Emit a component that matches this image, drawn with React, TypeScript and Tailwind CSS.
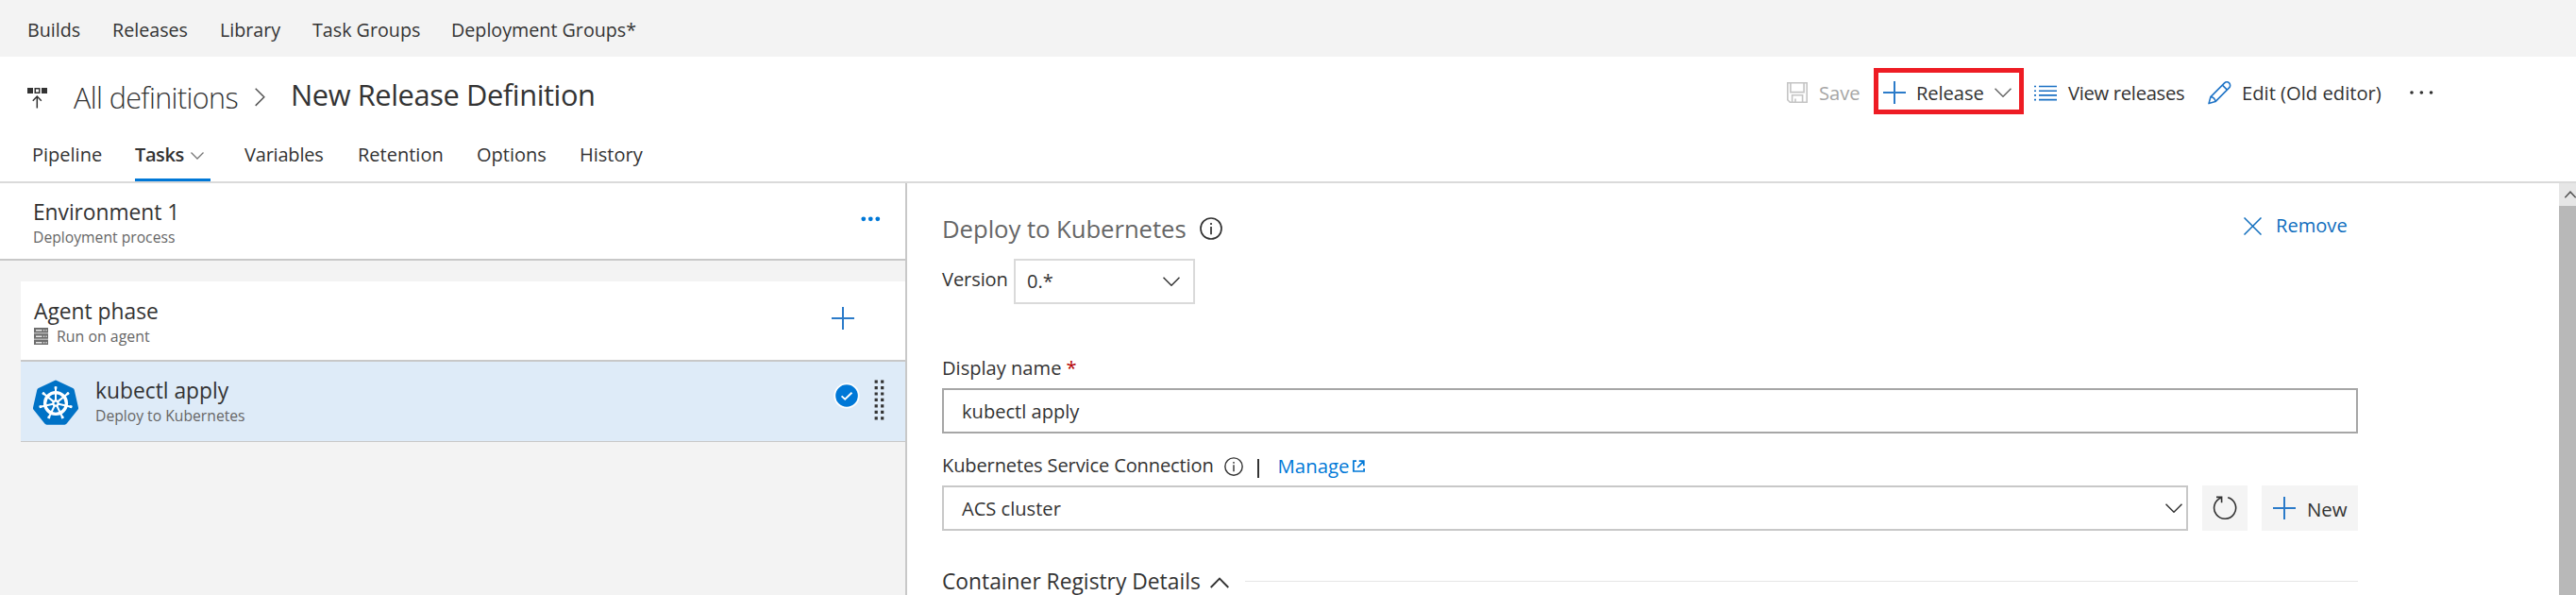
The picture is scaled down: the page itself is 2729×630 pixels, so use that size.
type IconProps = { className?: string };

function Chevron({ className = "" }: IconProps) {
  return (
    <svg className={`shrink-0 ${className}`} width="18" height="10" viewBox="0 0 18 10" fill="none" stroke="currentColor" strokeWidth="1.5">
      <path d="M0.5 0.7 9 9.2 17.5 0.7" />
    </svg>
  );
}

function Plus({ className = "" }: IconProps) {
  return (
    <svg className={`shrink-0 text-[#2b7bc9] ${className}`} width="24" height="24" viewBox="0 0 24 24" stroke="currentColor" strokeWidth="2">
      <path d="M12 0V24M0 12H24" />
    </svg>
  );
}

function Info({ className = "" }: IconProps) {
  return (
    <svg className={`shrink-0 ${className}`} viewBox="0 0 24 24" fill="none" stroke="currentColor" strokeWidth="1.7">
      <circle cx="12" cy="12" r="11" />
      <path d="M12 10V18.2M12 6V8" />
    </svg>
  );
}

function ReleaseIcon({ className = "" }: IconProps) {
  return (
    <svg className={`shrink-0 ${className}`} width="22" height="22" viewBox="0 0 22 22" fill="none" stroke="#333" strokeWidth="1.5">
      <path d="M0 0h6v6H0zM15 0h6v6h-6z" fill="#333" stroke="none" />
      <path d="M8.25 0.75h4.5v4.5h-4.5z" />
      <path d="M10.3 21.5V9M5.8 13.7 10.3 9l4.5 4.7" />
    </svg>
  );
}

function SaveIcon({ className = "" }: IconProps) {
  return (
    <svg className={`shrink-0 ${className}`} width="22" height="22" viewBox="0 0 22 22" fill="none" stroke="#c4c4c4" strokeWidth="1.6">
      <path d="M0.8 0.8H21.2V21.2H3.3L0.8 18.7z" />
      <path d="M3.9 0.8V10.6H18.1V0.8M5.6 21.2V13.8H16.6V21.2M9 21.2V17.4" />
    </svg>
  );
}

function ListIcon({ className = "" }: IconProps) {
  return (
    <svg className={`shrink-0 ${className}`} width="24" height="17" viewBox="0 0 24 17" stroke="#1a70c4" strokeWidth="1.6">
      <path d="M5 1.5H24M5 6.2H24M5 10.9H24M5 15.6H24M0 1.5H2M0 6.2H2M0 10.9H2M0 15.6H2" />
    </svg>
  );
}

function PencilIcon({ className = "" }: IconProps) {
  return (
    <svg className={`shrink-0 ${className}`} width="25" height="25" viewBox="0 0 25 25" fill="none" stroke="#1f74c7" strokeWidth="1.6" strokeLinejoin="round">
      <path d="M1 23.6 2.9 16.6 17.6 1.9a3.5 3.5 0 0 1 5 5L8 21.6z" />
      <path d="M2.9 16.6C5.6 16.6 8 19 8 21.6M15.4 4.1l5 5" />
    </svg>
  );
}

function Dots({ className = "" }: IconProps) {
  return (
    <svg className={`shrink-0 ${className}`} width="25" height="4" viewBox="0 0 25 4" fill="#333">
      <circle cx="2" cy="2" r="1.8" />
      <circle cx="12.3" cy="2" r="1.8" />
      <circle cx="22.5" cy="2" r="1.8" />
    </svg>
  );
}

function ServerIcon({ className = "" }: IconProps) {
  return (
    <svg className={`shrink-0 ${className}`} width="15" height="18" viewBox="0 0 15 18">
      <path d="M0 0h15v18H0z" fill="#b4b4b4" />
      {[0, 6.5, 13].map((y) => (
        <g key={y}>
          <path d={`M0 ${y}h15v5H0z`} fill="#6e6e6e" />
          <path d={`M2 ${y + 2}h6.5v1.4H2zM10 ${y + 2}h1.2v1.4H10zM12.5 ${y + 2}h1.2v1.4h-1.2z`} fill="#e8e8e8" />
        </g>
      ))}
    </svg>
  );
}

const ANGLES = [0, 1, 2, 3, 4, 5, 6].map((i) => (i * 2 * Math.PI) / 7);

function KubernetesIcon({ className = "" }: IconProps) {
  const points = ANGLES.map((a) => `${24 + 21.8 * Math.sin(a)},${25.2 - 21.8 * Math.cos(a)}`).join(" ");
  return (
    <svg className={`shrink-0 ${className}`} width="48" height="48" viewBox="0 0 48 48">
      <polygon points={points} fill="#0072c6" stroke="#0072c6" strokeWidth="5.6" strokeLinejoin="round" />
      <g stroke="#fff" fill="none">
        <circle cx="24" cy="25" r="11.4" strokeWidth="3.4" />
        {ANGLES.map((a) => (
          <g key={a}>
            <path
              d={`M${24 + 3 * Math.sin(a)} ${25 - 3 * Math.cos(a)}L${24 + 17.8 * Math.sin(a)} ${25 - 17.8 * Math.cos(a)}`}
              strokeWidth="2"
            />
            <path
              d={`M${24 + 15.4 * Math.sin(a)} ${25 - 15.4 * Math.cos(a)}L${24 + 17.6 * Math.sin(a)} ${25 - 17.6 * Math.cos(a)}`}
              strokeWidth="2.8"
            />
          </g>
        ))}
        <circle cx="24" cy="25" r="2.6" strokeWidth="2.2" />
      </g>
    </svg>
  );
}

function Check({ className = "" }: IconProps) {
  return (
    <svg className={`shrink-0 ${className}`} width="28" height="28" viewBox="0 0 28 28" fill="none">
      <circle cx="14" cy="14" r="12.7" fill="#0078d7" stroke="#fff" strokeWidth="1.8" />
      <path d="M8.6 14.4 12.2 17.8 19.5 10.7" stroke="#fff" strokeWidth="1.9" />
    </svg>
  );
}

function Grip({ className = "" }: IconProps) {
  return (
    <svg className={`shrink-0 ${className}`} width="11" height="43" viewBox="0 0 11 43" fill="#333">
      {[0, 1, 2, 3, 4, 5, 6].map((i) => (
        <path key={i} d={`M0.6 ${0.5 + i * 6.45}h3.2v3.2h-3.2zM7.1 ${0.5 + i * 6.45}h3.2v3.2h-3.2z`} />
      ))}
    </svg>
  );
}

function NavBar() {
  return (
    <nav className="flex h-[60px] bg-[#f3f3f3] pt-[2px] pl-[29px] text-[19.7px] leading-[60px]">
      <span className="w-[90px]">Builds</span>
      <span className="w-[114px]">Releases</span>
      <span className="w-[98px]">Library</span>
      <span className="w-[147px]">Task Groups</span>
      <span>Deployment Groups*</span>
    </nav>
  );
}

function TitleRow() {
  return (
    <div className="flex h-20 items-start pl-[29px] text-[20.2px] leading-7">
      <ReleaseIcon className="mt-[33px]" />
      <span className="mt-[23px] ml-[27px] w-[192px] text-[30.5px] leading-10 font-light tracking-[-0.6px]">All definitions</span>
      <svg className="mt-[33px] shrink-0" width="11" height="20" viewBox="0 0 11 20" fill="none" stroke="#555" strokeWidth="1.5">
        <path d="M0.7 0.7 9.8 9.8 0.7 18.9" />
      </svg>
      <span className="mt-5 ml-[27px] w-[1585px] text-[30.8px] leading-10 tracking-[-0.4px]">New Release Definition</span>

      <SaveIcon className="mt-[27px]" />
      <span className="mt-6 ml-3 w-[58px] text-[#a6a6a6]">Save</span>
      <div className="mt-3 flex h-[49px] w-[159px] shrink-0 items-start border-[5px] border-[#ee1c24]">
        <Plus className="mt-[9px] ml-[5px]" />
        <span className="mt-[7px] ml-[11px] w-[83px] tracking-[-0.1px]">Release</span>
        <Chevron className="mt-[15.5px] text-[#666]" />
      </div>
      <ListIcon className="mt-[30px] ml-[11px]" />
      <span className="mt-6 ml-3 w-[148px] tracking-[-0.3px]">View releases</span>
      <PencilIcon className="mt-[26px]" />
      <span className="mt-6 ml-[11px] w-[178px]">Edit (Old editor)</span>
      <Dots className="mt-[35.5px]" />
    </div>
  );
}

function Tabs() {
  return (
    <div className="flex h-[54px] border-b-2 border-[#dadada] pl-[34px] text-[20px] leading-7">
      <span className="w-[109px] pt-[10px]">Pipeline</span>
      <div className="flex h-[52px] w-20 border-b-[3px] border-[#0078d7]">
        <span className="w-[59px] pt-[10px] font-semibold tracking-[-0.4px]">Tasks</span>
        <svg className="mt-[21px]" width="14" height="8" viewBox="0 0 14 8" fill="none" stroke="#777" strokeWidth="1.3">
          <path d="M0.5 0.5 7 7 13.5 0.5" />
        </svg>
      </div>
      <span className="ml-9 w-[120px] pt-[10px] tracking-[-0.2px]">Variables</span>
      <span className="w-[126px] pt-[10px]">Retention</span>
      <span className="w-[109px] pt-[10px]">Options</span>
      <span className="pt-[10px]">History</span>
    </div>
  );
}

function TaskPane() {
  return (
    <aside className="flex h-[436px] w-[961px] shrink-0 flex-col border-r-2 border-[#c8c8c8] bg-[#f3f3f3]">
      <div className="flex h-[82px] border-b-2 border-[#c8c8c8] bg-white pl-[35px]">
        <div className="flex w-[877px] flex-col pt-[15px]">
          <span className="text-[22.8px] leading-8 tracking-[-0.05px]">Environment 1</span>
          <span className="text-[15.7px] leading-5 text-[#666]">Deployment process</span>
        </div>
        <svg className="mt-[35px] shrink-0" width="21" height="6" viewBox="0 0 21 6" fill="#0078d7">
          <circle cx="2.8" cy="2.8" r="2.4" />
          <circle cx="10.3" cy="2.8" r="2.4" />
          <circle cx="17.8" cy="2.8" r="2.4" />
        </svg>
      </div>
      <div className="mt-[22px] ml-[22px] flex h-[85px] border-b-2 border-[#c8c8c8] bg-white pl-[14px]">
        <div className="flex w-[845px] flex-col pt-4">
          <span className="text-[22.8px] leading-8">Agent phase</span>
          <div className="flex text-[15.9px] leading-5 text-[#666]">
            <ServerIcon className="mt-px" />
            <span className="ml-[9px]">Run on agent</span>
          </div>
        </div>
        <Plus className="mt-[27px]" />
      </div>
      <div className="ml-[22px] flex h-[85px] border-b border-[#c8c8c8] bg-[#deebf8] pl-[13px]">
        <KubernetesIcon className="mt-[19px]" />
        <div className="ml-[18px] flex w-[782px] flex-col pt-[15px]">
          <span className="text-[22.8px] leading-8">kubectl apply</span>
          <span className="text-[15.7px] leading-5 text-[#666]">Deploy to Kubernetes</span>
        </div>
        <Check className="mt-[22px]" />
        <Grip className="mt-[19px] ml-[15px]" />
      </div>
    </aside>
  );
}

function DetailPane() {
  return (
    <main className="flex h-[436px] w-[1750px] shrink-0 flex-col overflow-hidden pl-[37px] text-[20.1px] leading-7">
      <div className="flex h-20 shrink-0 items-start">
        <span className="mt-[31px] w-[273px] text-[25.7px] leading-9 tracking-[-0.05px] text-[#666]">Deploy to Kubernetes</span>
        <Info className="mt-[36px] h-6 w-6" />
        <svg className="mt-9 ml-[1082px] shrink-0" width="19" height="19" viewBox="0 0 19 19" stroke="#106ebe" strokeWidth="1.5">
          <path d="M0.5 0.5 18.5 18.5M18.5 0.5 0.5 18.5" />
        </svg>
        <span className="mt-[31px] ml-[15px] text-[#106ebe]">Remove</span>
      </div>
      <div className="flex h-12 shrink-0 items-start">
        <span className="mt-2 w-[76px] tracking-[-0.1px]">Version</span>
        <div className="flex h-12 w-48 border-2 border-[#dadada]">
          <span className="mt-[8px] ml-[12px] w-[144px]">0.*</span>
          <Chevron className="mt-[17px]" />
        </div>
      </div>
      <div className="mt-[54px] flex h-7 shrink-0">
        <span>Display name</span>
        <span className="ml-[5px] text-[#b40000]">*</span>
      </div>
      <div className="mt-[7px] flex h-12 w-[1500px] shrink-0 border-2 border-[#a6a6a6] pt-[9px] pl-[19px]">
        <span>kubectl apply</span>
      </div>
      <div className="mt-5 flex h-[35px] shrink-0 items-start">
        <span className="w-[299px] tracking-[-0.15px]">Kubernetes Service Connection</span>
        <Info className="mt-[5px] h-5 w-5" />
        <span className="mt-[7px] ml-[15px] h-5 w-[1.5px] bg-[#333]" />
        <span className="ml-[20px] w-[79px] text-[20.4px] text-[#0078d7]">Manage</span>
        <svg className="mt-[8px] shrink-0" width="13" height="13" viewBox="0 0 13 13" fill="none" stroke="#0078d7" strokeWidth="1.7">
          <path d="M4 1.2H0.9V12H12.1V9M5.2 7.8 11.6 1.4M6.8 1.2H11.8V6.2" />
        </svg>
      </div>
      <div className="flex h-12 shrink-0">
        <div className="flex h-12 w-[1320px] border-2 border-[#c8c8c8] pl-[19px]">
          <span className="mt-[9px] w-[1275px]">ACS cluster</span>
          <Chevron className="mt-[17px]" />
        </div>
        <div className="ml-[15px] flex h-12 w-12 items-center justify-center bg-[#f4f4f4]">
          <svg width="26" height="26" viewBox="0 0 26 26" fill="none" stroke="#333" strokeWidth="1.6">
            <path d="M16.2 1.7A11.5 11.5 0 1 1 9.4 1.9M4 1.4H9.6V7.2" />
          </svg>
        </div>
        <div className="ml-[15px] flex h-12 w-[102px] bg-[#f4f4f4]">
          <Plus className="mt-3 ml-3" />
          <span className="mt-[11px] ml-[12px] text-[20.4px]">New</span>
        </div>
      </div>
      <div className="mt-[36px] flex h-9 shrink-0 items-start">
        <span className="w-[284px] text-[22.8px] leading-9">Container Registry Details</span>
        <svg className="mt-[13px] shrink-0" width="20" height="12" viewBox="0 0 20 12" fill="none" stroke="#333" strokeWidth="1.9">
          <path d="M0.7 11 10 1.5 19.3 11" />
        </svg>
        <span className="mt-[17px] ml-[17px] h-px w-[1179px] bg-[#e6e6e6]" />
      </div>
    </main>
  );
}

function ScrollBar() {
  return (
    <div className="flex h-[436px] w-[18px] shrink-0 flex-col bg-[#b8b8b8]">
      <div className="h-6 overflow-hidden bg-[#e6e6e6]">
        <svg className="mt-2 ml-[6px]" width="12" height="8" viewBox="0 0 12 8" fill="none" stroke="#555" strokeWidth="1.5">
          <path d="M0.3 7.3 6 1.2 11.7 7.3" />
        </svg>
      </div>
    </div>
  );
}

export default function App() {
  return (
    <div className="flex h-[630px] w-[2729px] flex-col overflow-hidden bg-white font-['Open_Sans',sans-serif] whitespace-nowrap text-[#333] [&_span]:shrink-0">
      <NavBar />
      <TitleRow />
      <Tabs />
      <div className="flex h-[436px]">
        <TaskPane />
        <DetailPane />
        <ScrollBar />
      </div>
    </div>
  );
}
